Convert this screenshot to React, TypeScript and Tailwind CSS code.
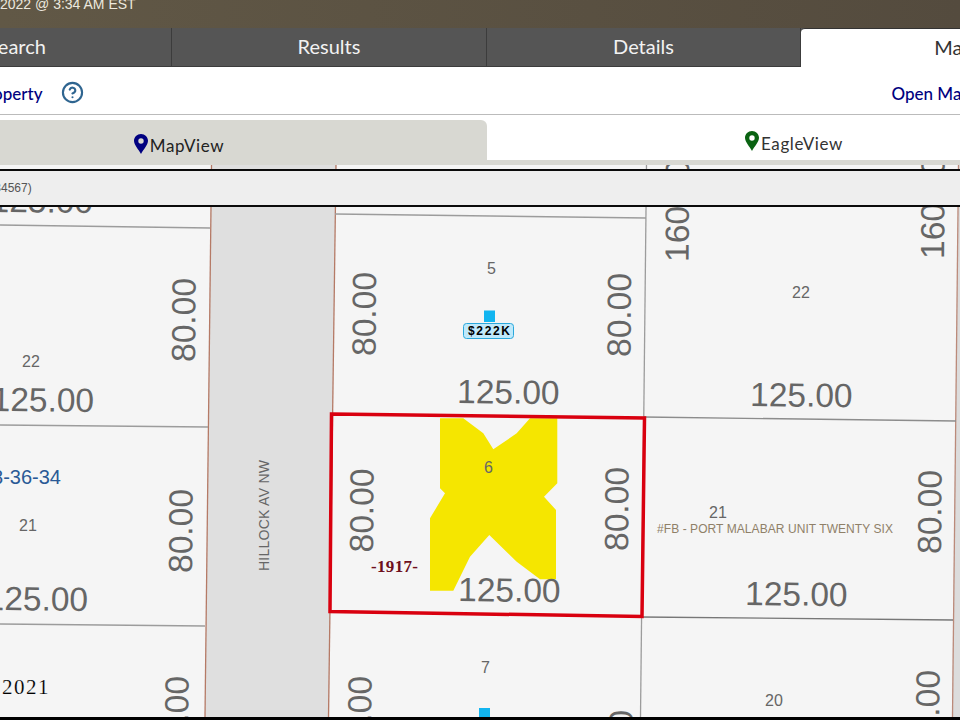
import { CircleHelp } from "lucide-react";

function Pin({ color }: { color: string }) {
  return (
    <svg width="14" height="20" viewBox="0 0 14 20" className="mt-[2px] shrink-0">
      <path
        fillRule="evenodd"
        fill={color}
        d="M7 0C3.1 0 0 3 0 6.8 0 11 4.6 15.6 7 20c2.4-4.4 7-9 7-13.2C14 3 10.900 0 7 0Zm0 4.300a2.700 2.700 0 1 1 0 5.400 2.700 2.700 0 0 1 0-5.400Z"
      />
    </svg>
  );
}

function H({ x, y, end }: { x: number; y: number; end?: boolean }) {
  return (
    <text x={x} y={y} fontSize="33.500" fill="#666" textAnchor={end ? "end" : "start"} transform={`rotate(0.6 ${x} ${y})`}>
      125.00
    </text>
  );
}

function V({ x, y, t = "80.00" }: { x: number; y: number; t?: string }) {
  const px = x - 2;
  return (
    <text x={px} y={y} fontSize="33.500" fill="#666" transform={`rotate(-89.6 ${px} ${y})`}>
      {t}
    </text>
  );
}

function N({ x, y, t }: { x: number; y: number; t: string }) {
  return (
    <text x={x} y={y} fontSize="16" fill="#666">
      {t}
    </text>
  );
}

function Seg({ d, c }: { d: string; c: string }) {
  return <path d={d} fill="none" stroke={c} strokeWidth="1.300" />;
}

function MapCanvas() {
  return (
    <svg width="960" height="552" viewBox="0 165 960 552" className="block">
      <rect x="0" y="165" width="960" height="552" fill="#f5f5f5" />
      <polygon points="211,165 336,165 329,717 205,717" fill="#dfdfdf" />
      <polygon points="958.500,165 960,165 960,717 952,717" fill="#dcdcdc" />
      <Seg d="M211.500 165 L205 717" c="#b57a66" />
      <Seg d="M336 165 L328.500 717" c="#b57a66" />
      <Seg d="M958.500 165 L952.500 717" c="#bb8a7a" />
      <Seg d="M646.500 165 L640.500 717" c="#9c9c9c" />
      <Seg d="M0 225 L210 228" c="#9c9c9c" />
      <Seg d="M0 425 L208 427" c="#9c9c9c" />
      <Seg d="M0 624 L205 626" c="#9c9c9c" />
      <Seg d="M335 214 L646 218" c="#9c9c9c" />
      <Seg d="M644 417 L956 421" c="#8c8c8c" />
      <Seg d="M641 617 L953 620" c="#777" />

      <polygon
        fill="#f5e600"
        points="440,418.300 463.300,418.300 483.300,433.300 493.300,449.300 516.700,433.300 530,418.300 557.300,418.300 557.300,483.300 544,496.700 556,510 556,579.300 540,579.300 516.700,561.700 489.300,535 470,556.700 453.300,590.700 430,590.700 430,518.300 445,493.300 440,488.300"
      />
      <polygon
        points="331.500,414 644.500,418 642,616.500 330,611.500"
        fill="none"
        stroke="#d9000f"
        strokeWidth="3.500"
      />

      <H x={93} y={213} end />
      <H x={457} y={403} />
      <H x={750} y={406} />
      <H x={94} y={412} end />
      <H x={88} y={611} end />
      <H x={458} y={601} />
      <H x={745} y={605} />

      <V x={197} y={362} />
      <V x={194} y={573} />
      <V x={190} y={760} />
      <V x={377.500} y={356} />
      <V x={632.500} y={357} />
      <V x={375} y={552.500} />
      <V x={630} y={551} />
      <V x={943} y={554} />
      <V x={373} y={760} />
      <V x={634} y={794} />
      <V x={941} y={754} />
      <V x={690.500} y={262} t="160.00" />
      <V x={946} y={259} t="160.00" />

      <N x={22} y={366.500} t="22" />
      <N x={487} y={274} t="5" />
      <N x={792} y={298} t="22" />
      <N x={19} y={530.500} t="21" />
      <N x={484} y={473} t="6" />
      <N x={709} y={517.500} t="21" />
      <N x={765} y={705.500} t="20" />
      <N x={481} y={673} t="7" />

      <text x={371} y={571.500} fontSize="17" fontWeight="700" fill="#6e0f1c" fontFamily="'Liberation Serif', serif" textLength={47}>
        -1917-
      </text>
      <text x={657} y={533} fontSize="12" fill="#8f8068" textLength={236}>
        #FB  - PORT MALABAR UNIT TWENTY SIX
      </text>
      <text x={61} y={484} fontSize="20" fill="#2a5a96" textAnchor="end">
        28-36-34
      </text>
      <text x={269} y={571} fontSize="14" fill="#666" textLength={111} transform="rotate(-90 269 571)">
        HILLOCK AV NW
      </text>
      <text
        x={50}
        y={694}
        fontSize="21"
        fill="#000"
        stroke="#ffffff"
        strokeWidth="0.150"
        letterSpacing="1.500"
        textAnchor="end"
        fontFamily="'Liberation Serif', serif"
      >
        s 2021
      </text>

      <rect x="484" y="310.500" width="11" height="11.500" fill="#12b5f0" />
      <rect x="463.500" y="323.500" width="50" height="15" rx="3" fill="#bfe9fb" stroke="#2aa8dc" />
      <text x={468} y={335} fontSize="12" fontWeight="700" fill="#000" textLength={42}>
        $222K
      </text>
      <rect x="479" y="708" width="11" height="9" fill="#12b5f0" />
    </svg>
  );
}

export default function App() {
  return (
    <div className="relative h-[720px] w-[960px] overflow-hidden bg-white font-['Liberation_Sans',Arial,sans-serif]">
      <div className="h-[28px] overflow-hidden bg-gradient-to-r from-[#615846] to-[#544b3e]">
        <div className="-mt-[3px] text-[14px] leading-[14px] text-[#ece8de]">2022 @ 3:34 AM EST</div>
      </div>

      <div className="-ml-[143px] flex h-[39px] w-[1260px] bg-[#555555] font-['Lato',sans-serif] text-[20px] text-[#f2f2f2]">
        <div className="flex w-[315px] items-center justify-center border-r border-b border-[#3c3c3c] pb-[2px] pl-[5px]">Search</div>
        <div className="flex w-[315px] items-center justify-center border-r border-b border-[#3c3c3c] pb-[2px]">Results</div>
        <div className="flex w-[314px] items-center justify-center border-r border-b border-[#3c3c3c] pb-[2px]">Details</div>
        <div className="flex w-[316px] items-center justify-center rounded-tl-[4px] border-t border-[#333333] bg-white pr-[10px] pb-[2px] text-[#333333]">Map</div>
      </div>

      <div className="-ml-[143px] flex h-[48px] w-[1260px] items-center justify-between border-b border-[#bbbbbb] pt-[7px] pr-[146px] pl-[120px] font-['Lato',sans-serif] text-[17px] font-medium text-[#000080]">
        <div className="flex items-center gap-[19px]">
          <span>Property</span>
          <CircleHelp size={23} strokeWidth={2.200} color="#2f6590" className="-mt-[4px]" />
        </div>
        <span>Open Map</span>
      </div>

      <div className="-ml-[143px] flex h-[50px] w-[1260px] pt-[5px] font-['Lato',sans-serif] text-[17px] tracking-[0.6px]">
        <div className="flex w-[630px] items-center justify-center gap-[2px] rounded-tr-[6px] bg-[#d8d8d2] pl-[14px] text-[#222222]">
          <Pin color="#000080" />
          <span className="mt-[7px]">MapView</span>
        </div>
        <div className="flex w-[630px] items-center justify-center gap-[2px] border-b-[5px] border-[#d8d8d2] pr-[16px] text-[#333333]">
          <Pin color="#0a6312" />
          <span className="mt-[7px]">EagleView</span>
        </div>
      </div>

      <div className="relative h-[552px]">
        <MapCanvas />
        <div className="absolute top-[4px] left-0 flex h-[38px] w-full items-center overflow-hidden border-y-2 border-[#0a0a0a] bg-[#eeeeee]">
          <span className="-ml-[23px] text-[12px] text-[#555555]">(1234567)</span>
        </div>
      </div>
      <div className="h-[3px] bg-black" />
    </div>
  );
}
